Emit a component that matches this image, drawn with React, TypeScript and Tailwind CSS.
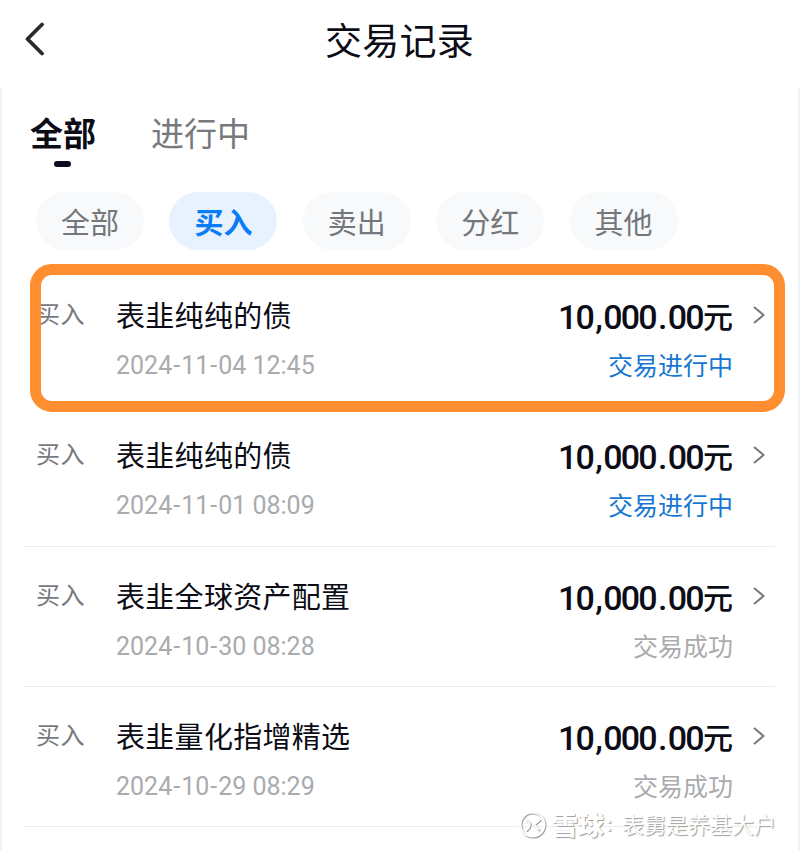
const filters = ['全部', '买入', '卖出', '分红', '其他'];

const records = [
    { name: '表韭纯纯的债', date: '2024-11-04', time: '12:45', status: '交易进行中', pending: true },
    { name: '表韭纯纯的债', date: '2024-11-01', time: '08:09', status: '交易进行中', pending: true },
    { name: '表韭全球资产配置', date: '2024-10-30', time: '08:28', status: '交易成功', pending: false },
    { name: '表韭量化指增精选', date: '2024-10-29', time: '08:29', status: '交易成功', pending: false },
];

export default function App(){
    return(
        <div className="relative flex flex-col w-[800px] h-[850px] overflow-hidden bg-white font-['Noto_Sans_CJK_SC',sans-serif] text-[#0b0c16]">
            <Header/>
            <main className="grow border-x-2 border-[#f1f1f8]">
                <Tabs/>
                <Filters/>
                <div className="mt-4 ml-[22px] mr-[23px]">
                    {records.map((record, i) => <Row key={i} record={record}/>)}
                </div>
            </main>
            <div className="absolute left-[30px] top-[264px] w-[755px] h-[148px] border-[11px] border-[#ff8e31] rounded-[22px]"></div>
            <Watermark/>
        </div>
    );
}

function Header(){
    return(
        <header className="grid grid-cols-[1fr_auto_1fr] items-center h-[88px] pb-[11px] pl-[25px] pr-[26px]">
            <svg className="w-5 h-[34px]" viewBox="0 0 20 34" fill="none" stroke="#2b2b2e" strokeWidth="3.8" strokeLinecap="round" strokeLinejoin="round">
                <path d="M17 2.5L2.5 17L17 31.5"/>
            </svg>
            <h1 className="text-[37px] leading-[48px] tracking-[0.2px]">交易记录</h1>
        </header>
    );
}

function Tabs(){
    return(
        <div className="flex h-[104px] pt-[22px] pl-7 leading-[44px]">
            <div className="flex flex-col items-center w-[66px]">
                <button className="text-[33px] font-bold whitespace-nowrap">全部</button>
                <span className="w-[17px] h-[6px] mt-[7px] mr-[2px] rounded-full bg-[#0b0c20]"></span>
            </div>
            <button className="self-start ml-[55px] text-[33px] text-[#77797d]">进行中</button>
        </div>
    );
}

function Filters(){
    return(
        <div className="flex gap-[25.4px] pl-[34px] text-[29px] leading-[58px]">
            {filters.map((filter) => (
                <button key={filter} className={filter === '买入'
                    ? 'w-[108px] h-[58px] rounded-full bg-[#e8f2ff] font-bold text-[#0a7cf6]'
                    : 'w-[108px] h-[58px] rounded-full bg-[#f7f9fb] text-[#74767a]'}>{filter}</button>
            ))}
        </div>
    );
}

function Row({ record }: { record: typeof records[number] }){
    const [year, month, day] = record.date.split('-');

    return(
        <div className="flex h-[140.3px] pt-[28px] pl-3 border-b border-[#ededf0] leading-[40px] first:border-[#fcfcfc]">
            <span className="w-[80px] -mt-px text-[24px] tracking-[0.6px] text-[#77797d]">买入</span>
            <div className="grow">
                <div className="text-[29px] tracking-[0.3px]">{record.name}</div>
                <div className="h-10 mt-[12px] font-[Roboto] text-[25px] text-[#a9abae]">
                    {year}<Dash/>{month}<Dash/>{day} {record.time}
                </div>
            </div>
            <div className="w-[180px] text-right">
                <div className="flex justify-end h-10 text-[30px] font-medium">
                    <span className="pt-[3px] font-[Roboto] text-[34px] tracking-[-1.7px]">10<span className="mx-[2px]">,</span>000<span className="mx-[2px]">.</span>00</span>
                    <span className="pt-px">元</span>
                </div>
                <div className={record.pending ? 'mt-[10px] text-[25px] text-[#1677d2]' : 'mt-[10px] text-[25px] text-[#a9abae]'}>{record.status}</div>
            </div>
            <svg className="w-3 h-[18px] mt-[12px] ml-5 mr-[10px]" viewBox="0 0 12 18" fill="none" stroke="#77797d" strokeWidth="2">
                <path d="M1 1L10.5 9L1 17"/>
            </svg>
        </div>
    );
}

function Dash(){
    return <span className="mx-px">-</span>;
}

function Watermark(){
    return(
        <div className="absolute left-[519px] top-[809px] flex items-center h-8 whitespace-nowrap text-white [text-shadow:1px_1px_1px_#999999]">
            <svg className="w-7 h-7" viewBox="0 0 28 28" fill="none" strokeLinecap="round">
                <g stroke="#a0a0a0" strokeWidth="2.4" transform="translate(.8 .8)">
                    <circle cx="13.5" cy="13.5" r="12"/>
                    <path d="M7.500 9Q14 13 7.500 19M20.500 9L15 13.500L19.500 18.500"/>
                </g>
                <g stroke="#ffffff" strokeWidth="2">
                    <circle cx="13.5" cy="13.5" r="12"/>
                    <path d="M7.500 9Q14 13 7.500 19M20.500 9L15 13.500L19.500 18.500"/>
                </g>
            </svg>
            <span className="-mt-[3px] ml-[5px] text-[26px] font-black">雪球</span>
            <span className="w-[18px] -mt-[3px] pl-px text-[16px] font-bold">：</span>
            <span className="-mt-[3px] text-[22px]">表舅是养基大户</span>
        </div>
    );
}
